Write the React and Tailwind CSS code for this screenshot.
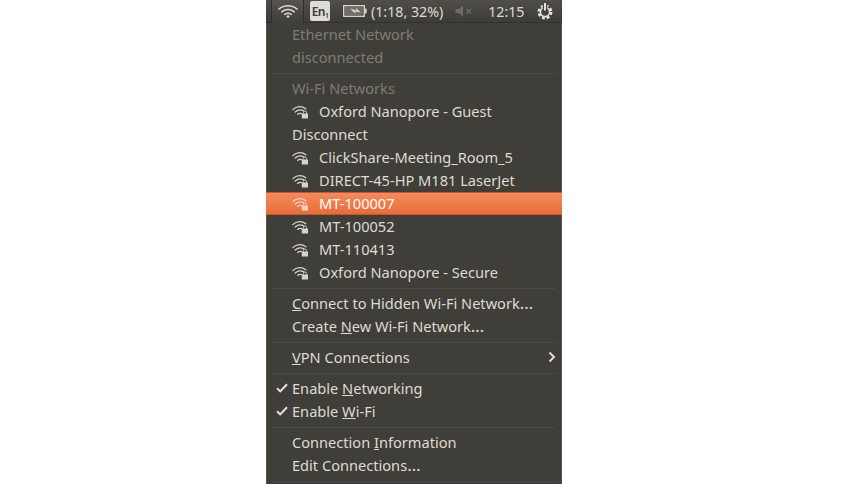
const WifiLock = ({ className = "" }) => (
  <svg width="17" height="14" viewBox="0 0 17 14" className={className}>
    <g fill="none" stroke="currentColor" strokeLinecap="round" strokeWidth="1.3">
      <path d="M0.8 4.6C4.4 0.9 10 0.8 13.8 3.8" />
      <path d="M3.2 7C5.8 4.6 9.2 4.4 11.8 5.9" />
      <path d="M5.6 9.4C6.8 8.4 8.2 8.2 9.4 8.7" />
    </g>
    <rect x="9.8" y="8.4" width="6.2" height="5" rx="0.5" fill="currentColor" />
    <path d="M11.3 8.8V7.6a1.6 1.6 0 0 1 3.2 0V8.8" fill="none" stroke="currentColor" strokeWidth="0.9" />
  </svg>
);

const Check = () => (
  <svg width="12" height="10" viewBox="0 0 12 10" className="absolute left-[9px] top-[6px] text-[#e6e2da]">
    <path d="M1 5.2L4.2 8.4L11 1.2" fill="none" stroke="currentColor" strokeWidth="2" />
  </svg>
);

const Dots = () => <span className="text-[17px] leading-none">…</span>;

const Separator = () => (
  <div className="h-2 flex items-center px-[5px]">
    <div className="h-px w-full bg-[#4a4943]" />
  </div>
);

const Row = ({ children, disabled, icon, check, arrow }) => (
  <div className={`relative h-[23px] flex items-center pl-[25px] ${disabled ? "text-[#7f7d74]" : "text-[#dfdbd2]"}`}>
    {check && <Check />}
    {icon && <WifiLock className="mr-[10px] shrink-0 text-[#d6d3cb]" />}
    <span className="whitespace-pre">{children}</span>
    {arrow && (
      <svg width="8" height="12" viewBox="0 0 8 12" className="absolute right-[5px] top-[5px] text-[#dfdbd2]">
        <path d="M1.5 1.5L6 6L1.5 10.5" fill="none" stroke="currentColor" strokeWidth="2" />
      </svg>
    )}
  </div>
);

const networks = [
  "ClickShare-Meeting_Room_5",
  "DIRECT-45-HP M181 LaserJet",
];

export default function App() {
  return (
    <div className="w-[867px] h-[484px] overflow-hidden bg-white font-['Noto_Sans',sans-serif] text-[14.6px] leading-[23px]">
      <div className="ml-[266px] w-[296px]">
        {/* top panel */}
        <div className="h-[23px] pl-[5px] flex items-center bg-gradient-to-b from-[#4f4e48] to-[#3d3c38] text-[#dfdbd2] text-[14.2px] border-b border-[#33322e]">
          <div className="h-[23px] w-[33px] flex items-center justify-center border-x border-[#2f2e2b] bg-gradient-to-b from-[#55544e] to-[#3f3e39]">
            <svg width="20" height="14" viewBox="0 0 20 14" className="text-[#dcd9d1]">
              <g fill="none" stroke="currentColor" strokeLinecap="round" strokeWidth="1.6">
                <path d="M1 5C6 0.6 14 0.6 19 5" />
                <path d="M3.8 7.8C7.4 4.8 12.6 4.8 16.2 7.8" />
                <path d="M6.8 10.4C8.8 9 11.2 9 13.2 10.4" />
              </g>
              <circle cx="10" cy="12.6" r="1.3" fill="currentColor" />
            </svg>
          </div>
          <div className="ml-[6px] h-[20px] w-[20px] rounded-[2px] bg-[#dfdcd5] text-[#3c3b37] flex items-center justify-center text-[12px] font-semibold tracking-tighter">
            En<span className="text-[7px] mt-[8px]">1</span>
          </div>
          <svg width="24" height="12" viewBox="0 0 24 12" className="ml-[13px] text-[#dcd9d1]">
            <rect x="0.7" y="0.7" width="20.6" height="10.6" fill="none" stroke="currentColor" strokeWidth="1.3" />
            <rect x="2" y="2" width="18" height="8" fill="#6f6d66" />
            <path d="M7 3.4L13.4 5.6L13 3L18 7.6L12 6.4L12.6 9z" fill="currentColor" />
            <rect x="22" y="3.6" width="1.6" height="4.8" fill="currentColor" />
          </svg>
          <span className="ml-[4px] whitespace-pre">(1:18, 32%)</span>
          <svg width="18" height="12" viewBox="0 0 18 12" className="ml-[12px] text-[#6e6c64]">
            <path d="M0.5 4H3.5L8 0.8V11.2L3.5 8H0.5z" fill="currentColor" />
            <path d="M11.5 4L16 8.5M16 4L11.5 8.5" stroke="currentColor" strokeWidth="1.6" />
          </svg>
          <span className="ml-[15px]">12:15</span>
          <svg width="18" height="18" viewBox="0 0 18 18" className="ml-[12px] text-[#e4e1da]">
            <circle cx="9" cy="10" r="6" fill="none" stroke="currentColor" strokeWidth="3" strokeDasharray="2.8 1.9" />
            <circle cx="9" cy="10" r="4.6" fill="none" stroke="currentColor" strokeWidth="1.6" />
            <path d="M9 0.5V9" stroke="#45443f" strokeWidth="4.5" />
            <path d="M9 1V8.5" stroke="currentColor" strokeWidth="2" />
          </svg>
        </div>

        {/* dropdown */}
        <div className="h-[461px] bg-[#3f3e39] border-x border-[#55544d]">
          <Row disabled>Ethernet Network</Row>
          <Row disabled>disconnected</Row>
          <Separator />
          <Row disabled>Wi-Fi Networks</Row>
          <Row icon>Oxford Nanopore - Guest</Row>
          <Row>Disconnect</Row>
          {networks.map((name) => (
            <Row icon key={name}>{name}</Row>
          ))}
          <div className="h-[23px] -mx-px flex items-center pl-[26px] text-white bg-gradient-to-b from-[#f58a5a] to-[#e86c3a] border-y border-[#c9562a]">
            <WifiLock className="mr-[10px] shrink-0 text-[#f6d5c4]" />
            <span>MT-100007</span>
          </div>
          <Row icon>MT-100052</Row>
          <Row icon>MT-110413</Row>
          <Row icon>Oxford Nanopore - Secure</Row>
          <Separator />
          <Row><u>C</u>onnect to Hidden Wi-Fi Network<Dots /></Row>
          <Row>Create <u>N</u>ew Wi-Fi Network<Dots /></Row>
          <Separator />
          <Row arrow><u>V</u>PN Connections</Row>
          <Separator />
          <Row check>Enable <u>N</u>etworking</Row>
          <Row check>Enable <u>W</u>i-Fi</Row>
          <Separator />
          <Row>Connection <u>I</u>nformation</Row>
          <Row>Edit Connections<Dots /></Row>
          <Separator />
        </div>
      </div>
    </div>
  );
}
